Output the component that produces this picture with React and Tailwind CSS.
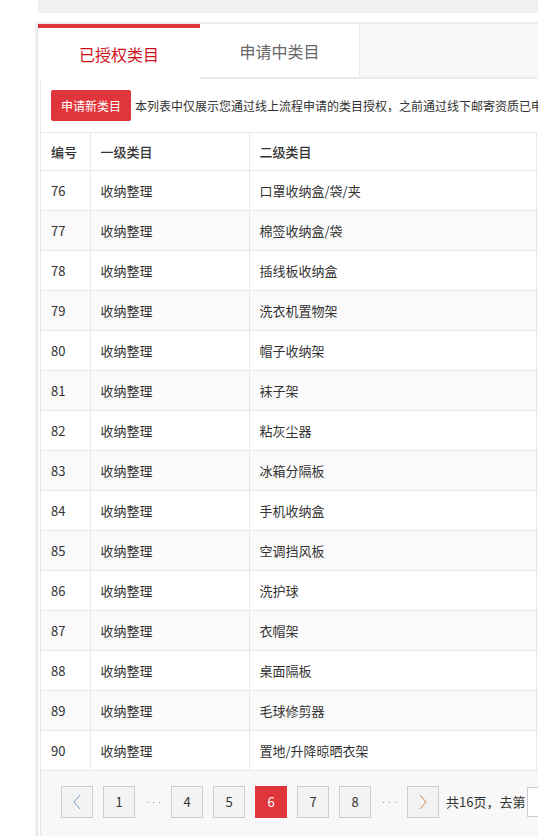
import React from "react";

const rows = [
  [76, "收纳整理", "口罩收纳盒/袋/夹"],
  [77, "收纳整理", "棉签收纳盒/袋"],
  [78, "收纳整理", "插线板收纳盒"],
  [79, "收纳整理", "洗衣机置物架"],
  [80, "收纳整理", "帽子收纳架"],
  [81, "收纳整理", "袜子架"],
  [82, "收纳整理", "粘灰尘器"],
  [83, "收纳整理", "冰箱分隔板"],
  [84, "收纳整理", "手机收纳盒"],
  [85, "收纳整理", "空调挡风板"],
  [86, "收纳整理", "洗护球"],
  [87, "收纳整理", "衣帽架"],
  [88, "收纳整理", "桌面隔板"],
  [89, "收纳整理", "毛球修剪器"],
  [90, "收纳整理", "置地/升降晾晒衣架"],
];

const PageBtn = ({ children, active }) => (
  <div
    className={`w-[32px] h-[32px] flex items-center justify-center border text-[13px] shrink-0 ${
      active
        ? "bg-[#e0353a] border-[#e0353a] text-white"
        : "bg-[#f3f3f3] border-[#cccccc] text-[#333]"
    }`}
  >
    {children}
  </div>
);

const Dots = () => (
  <div className="w-[16px] shrink-0 flex justify-center gap-[5px]">
    <span className="w-[1px] h-[1px] bg-[#999]"></span>
    <span className="w-[1px] h-[1px] bg-[#999]"></span>
    <span className="w-[1px] h-[1px] bg-[#999]"></span>
  </div>
);

const Chevron = ({ left }) => (
  <svg width="10" height="16" viewBox="0 0 10 16" fill="none">
    <path
      d={left ? "M8 1 L2 8 L8 15" : "M2 1 L8 8 L2 15"}
      stroke={left ? "#7a9cc6" : "#c98a4a"}
      strokeWidth="1"
    />
  </svg>
);

export default function App() {
  return (
    <div
      className="w-[538px] h-[836px] overflow-hidden bg-white pl-[38px]"
      style={{ fontFamily: '"Noto Sans CJK SC", "Noto Sans", sans-serif' }}
    >
      <div className="w-[760px]">
        <div className="h-[13px] bg-[#f0f0f0]"></div>

        <div className="mt-[10px] shadow-[-2px_0_3px_rgba(0,0,0,0.12)]">
          {/* tabs */}
          <div className="flex h-[56px] border-t border-[#e8e8e8]">
            <div className="w-[162px] bg-white flex flex-col">
              <div className="h-[4px] bg-[#e0353a]"></div>
              <div className="flex-1 flex items-center justify-center text-[16px] text-[#d0121b]">
                已授权类目
              </div>
            </div>
            <div className="w-[160px] bg-white border-r border-[#e8e8e8] border-b-2 border-b-[#ebebeb] flex items-center justify-center text-[16px] text-[#666]">
              申请中类目
            </div>
            <div className="flex-1 bg-[#f7f7f7] border-b-2 border-[#ebebeb]"></div>
          </div>

          {/* content */}
          <div className="ml-[2px] border-l border-[#e8e8e8] bg-white">
            <div className="flex items-center py-[11px] pl-[10px]">
              <button className="h-[31px] px-[10px] bg-[#e0353a] text-white text-[12px] rounded-[2px]">
                申请新类目
              </button>
              <span className="ml-[4px] text-[12px] text-[#333] whitespace-nowrap">
                本列表中仅展示您通过线上流程申请的类目授权，之前通过线下邮寄资质已申请的类目请在旧版页面查看
              </span>
            </div>

            <table className="w-[720px] border-collapse text-[13px] text-[#333] table-fixed">
              <colgroup>
                <col className="w-[49px]" />
                <col className="w-[159px]" />
                <col className="w-[287px]" />
                <col />
              </colgroup>
              <thead>
                <tr className="h-[38px] bg-white">
                  <th className="border border-l-0 border-[#e8e8e8] text-left font-medium pl-[10px]">编号</th>
                  <th className="border border-[#e8e8e8] text-left font-medium pl-[10px]">一级类目</th>
                  <th className="border border-[#e8e8e8] text-left font-medium pl-[10px]">二级类目</th>
                  <th className="border border-[#e8e8e8] text-left font-medium pl-[10px]">状态</th>
                </tr>
              </thead>
              <tbody>
                {rows.map((r, i) => (
                  <tr
                    key={r[0]}
                    className={`h-[40px] ${i % 2 === 1 ? "bg-[#fafafa]" : "bg-white"}`}
                  >
                    <td className="border border-l-0 border-[#e8e8e8] pl-[10px]">{r[0]}</td>
                    <td className="border border-[#e8e8e8] pl-[10px]">{r[1]}</td>
                    <td className="border border-[#e8e8e8] pl-[10px]">{r[2]}</td>
                    <td className="border border-[#e8e8e8] pl-[10px]">已授权</td>
                  </tr>
                ))}
              </tbody>
            </table>

            {/* pagination */}
            <div className="bg-[#f8f8f8] h-[70px] pt-[15px] pl-[20px] flex items-start gap-[10px]">
              <PageBtn>
                <Chevron left />
              </PageBtn>
              <PageBtn>1</PageBtn>
              <div className="h-[32px] flex items-center">
                <Dots />
              </div>
              <PageBtn>4</PageBtn>
              <PageBtn>5</PageBtn>
              <PageBtn active>6</PageBtn>
              <PageBtn>7</PageBtn>
              <PageBtn>8</PageBtn>
              <div className="h-[32px] flex items-center">
                <Dots />
              </div>
              <PageBtn>
                <Chevron />
              </PageBtn>
              <div className="h-[32px] flex items-center text-[13px] text-[#333] whitespace-nowrap -ml-[3px]">
                共16页，去第
                <input className="ml-[2px] w-[40px] h-[30px] bg-white border border-[#ccc]" />
                页
              </div>
            </div>
          </div>
        </div>
      </div>
    </div>
  );
}
